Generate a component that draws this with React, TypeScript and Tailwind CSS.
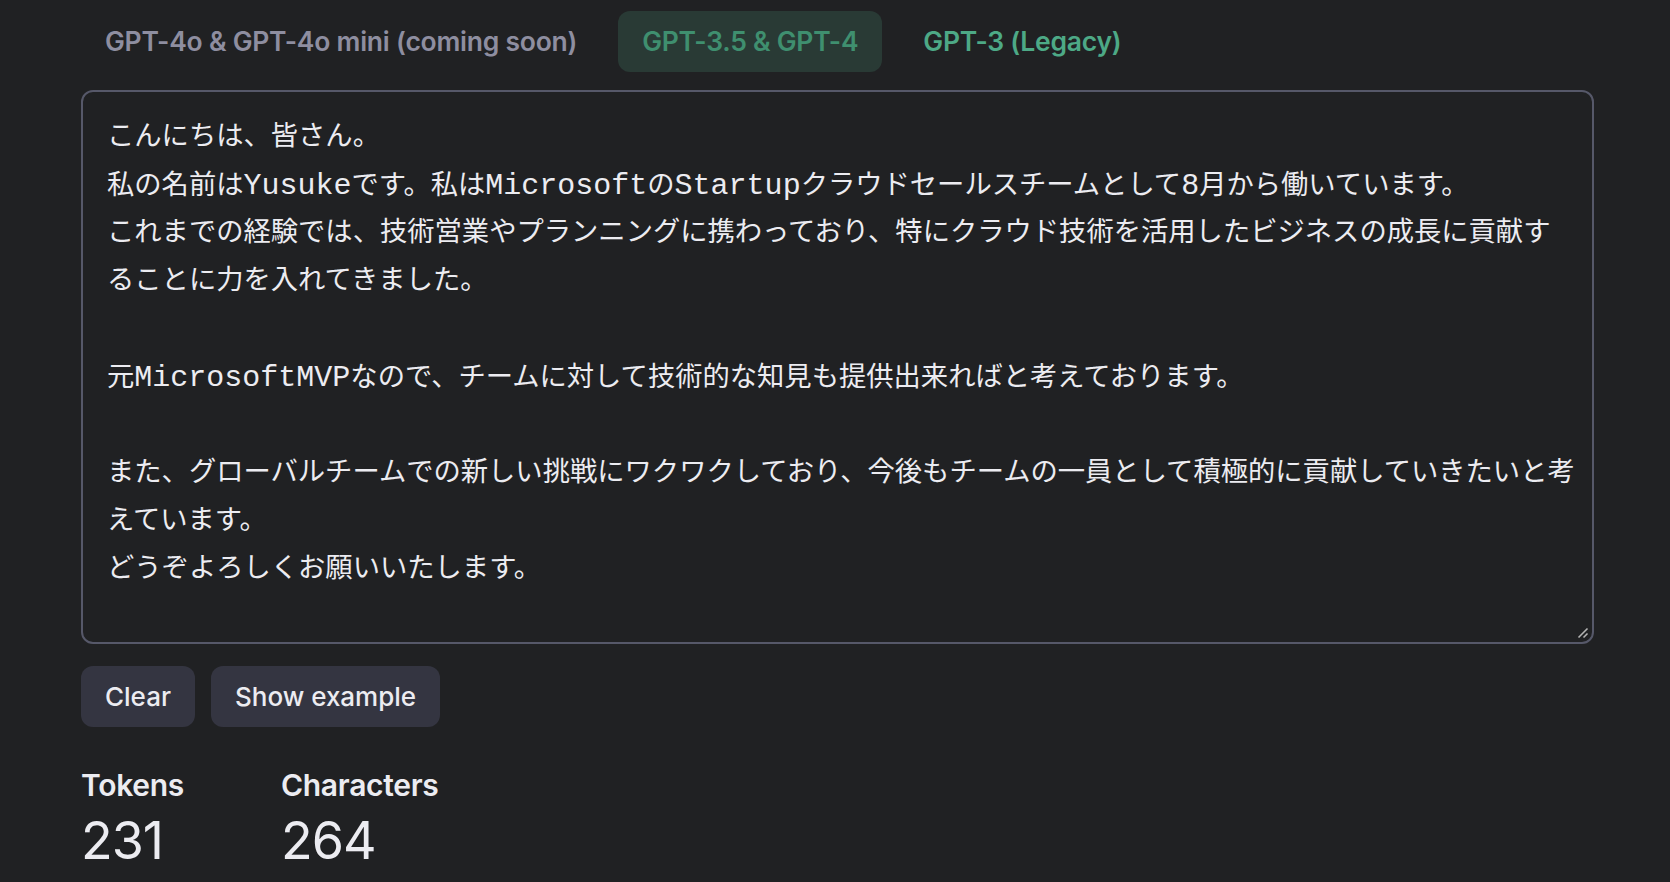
import { useState } from "react";

const tabs = [
  { id: "gpt4o", label: "GPT-4o & GPT-4o mini (coming soon)" },
  { id: "gpt35", label: "GPT-3.5 & GPT-4" },
  { id: "gpt3", label: "GPT-3 (Legacy)" },
];

const lines = [
  "こんにちは、皆さん。",
  "私の名前はYusukeです。私はMicrosoftのStartupクラウドセールスチームとして8月から働いています。",
  "これまでの経験では、技術営業やプランニングに携わっており、特にクラウド技術を活用したビジネスの成長に貢献す",
  "ることに力を入れてきました。",
  "",
  "元MicrosoftMVPなので、チームに対して技術的な知見も提供出来ればと考えております。",
  "",
  "また、グローバルチームでの新しい挑戦にワクワクしており、今後もチームの一員として積極的に貢献していきたいと考",
  "えています。",
  "どうぞよろしくお願いいたします。",
];

// latin runs get the wider mono face, the rest falls through to the CJK font
function Line({ text }: { text: string }) {
  const parts = text.split(/([A-Za-z0-9]+)/);
  return (
    <div className="h-[48px] whitespace-nowrap">
      {parts.map((p, i) =>
        /^[A-Za-z0-9]+$/.test(p) ? (
          <span key={i} className="text-[30px]">
            {p}
          </span>
        ) : (
          <span key={i}>{p}</span>
        )
      )}
    </div>
  );
}

function ResizeHandle() {
  return (
    <svg
      width="14"
      height="14"
      viewBox="0 0 14 14"
      className="absolute bottom-[3px] right-[3px]"
    >
      <path d="M12.5 3.5 L3.5 12.5" stroke="#b4b4b4" strokeWidth="1.6" />
      <path d="M12.5 8.5 L8.5 12.5" stroke="#b4b4b4" strokeWidth="1.6" />
    </svg>
  );
}

export default function App() {
  const [active, setActive] = useState("gpt35");

  return (
    <div className="min-h-[882px] w-full bg-[#202123] font-['Inter','Noto_Sans',sans-serif] text-[#ececf1]">
      <div className="ml-[81px] w-[1513px] pt-[11px]">
        {/* model tabs */}
        <div className="flex items-center gap-[17px]">
          {tabs.map((tab) => {
            const isActive = tab.id === active;
            const color =
              tab.id === "gpt4o"
                ? "text-[#8e8ea0]"
                : tab.id === "gpt35"
                  ? "text-[#3f8f6f]"
                  : "text-[#4da986]";
            return (
              <button
                key={tab.id}
                onClick={() => setActive(tab.id)}
                className={`h-[61px] rounded-xl px-6 text-[26.5px] font-semibold tracking-[-0.25px] ${color} ${
                  isActive ? "bg-[#293a35]" : ""
                }`}
              >
                {tab.label}
              </button>
            );
          })}
        </div>

        {/* prompt box */}
        <div className="relative mt-[18px] h-[554px] rounded-xl border-2 border-[#565869] bg-[#202123] px-[24px] pt-[22px] font-['Liberation_Mono','Noto_Sans_CJK_JP',monospace] text-[27.3px] leading-[48px] text-[#ececf1]">
          {lines.map((line, i) => (
            <Line key={i} text={line} />
          ))}
          <ResizeHandle />
        </div>

        {/* actions */}
        <div className="mt-[22px] flex gap-4">
          <button className="h-[61px] rounded-xl bg-[#343541] px-6 text-[26px] font-medium text-[#ececf1]">
            Clear
          </button>
          <button className="h-[61px] rounded-xl bg-[#343541] px-6 text-[26px] font-medium text-[#ececf1]">
            Show example
          </button>
        </div>

        {/* stats */}
        <div className="mt-[38px] flex">
          <div className="w-[200px]">
            <div className="text-[30px] font-semibold leading-[40px] tracking-[-0.3px] text-[#ececf1]">
              Tokens
            </div>
            <div className="mt-[6px] text-[52px] font-normal leading-[60px] tracking-[-1px] text-[#ececf1]">
              231
            </div>
          </div>
          <div>
            <div className="text-[30px] font-semibold leading-[40px] tracking-[-0.3px] text-[#ececf1]">
              Characters
            </div>
            <div className="mt-[6px] text-[52px] font-normal leading-[60px] tracking-[-1px] text-[#ececf1]">
              264
            </div>
          </div>
        </div>
      </div>
    </div>
  );
}
